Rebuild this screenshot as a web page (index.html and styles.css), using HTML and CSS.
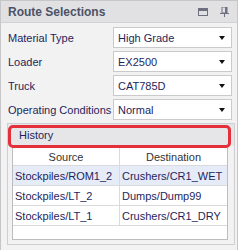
FILE: index.html
```html
<!DOCTYPE html>
<html lang="en">
<head>
    <meta charset="UTF-8">
    <link rel="stylesheet" href="styles.css">
    <title>Route Selections</title>
</head>
<body>

    <div class="panel">
        <div class="panel-header">
            <span class="panel-title">Route Selections</span>
            <span class="panel-icons">
                <svg width="10" height="8" viewBox="0 0 10 8"><rect x="0.5" y="0.5" width="9" height="7" fill="none" stroke="#6e7080"/><rect x="0" y="0" width="10" height="3" fill="#6e7080"/></svg>
                <svg width="9" height="10" viewBox="0 0 9 10"><rect x="2" y="0" width="5" height="6" fill="none" stroke="#6e7080"/><rect x="5" y="0" width="2" height="6" fill="#6e7080"/><rect x="0" y="6" width="9" height="1" fill="#6e7080"/><rect x="4" y="7" width="1" height="3" fill="#6e7080"/></svg>
            </span>
        </div>

        <div class="form">
            <label>Material Type</label>
            <div class="combo">High Grade</div>

            <label>Loader</label>
            <div class="combo">EX2500</div>

            <label>Truck</label>
            <div class="combo">CAT785D</div>

            <label>Operating Conditions</label>
            <div class="combo">Normal</div>
        </div>

        <div class="group">
            <div class="group-header">History</div>
            <div class="grid">
                <table>
                    <tr class="head">
                        <th class="col-src">Source</th>
                        <th>Destination</th>
                    </tr>
                    <tr class="selected">
                        <td>Stockpiles/ROM1_2</td>
                        <td>Crushers/CR1_WET</td>
                    </tr>
                    <tr>
                        <td>Stockpiles/LT_2</td>
                        <td>Dumps/Dump99</td>
                    </tr>
                    <tr>
                        <td>Stockpiles/LT_1</td>
                        <td>Crushers/CR1_DRY</td>
                    </tr>
                </table>
            </div>
        </div>
    </div>

</body>
</html>
```

FILE: styles.css
```css
body {
    font-family: 'Liberation Sans', Arial, sans-serif;
    font-size: 11px;
    background-color: #fff;
    margin: 0;
    padding: 0;
}

.panel {
    width: 238px;
    height: 250px;
    box-sizing: border-box;
    background-color: #f2f2f2;
    border: 1px solid #c6c6c8;
    border-bottom: none;
}

.panel-header {
    height: 21px;
    display: flex;
    align-items: center;
    justify-content: space-between;
    padding: 0 8px 0 7px;
    background-color: #e1e1e4;
    border-bottom: 1px solid #d2d2d6;
}

.panel-title {
    font-size: 12px;
    font-weight: bold;
    color: #4d5266;
}

.panel-icons {
    display: flex;
    align-items: center;
    gap: 12px;
}

.form {
    display: grid;
    grid-template-columns: 105px 119px;
    row-gap: 3px;
    padding: 4px 0 0 7px;
}

label {
    color: #1f1f5c;
    display: flex;
    align-items: center;
    height: 21px;
    white-space: nowrap;
}

.combo {
    height: 21px;
    box-sizing: border-box;
    background-color: #fff;
    border: 1px solid #cacacc;
    color: #1f1f5c;
    display: flex;
    align-items: center;
    padding-left: 4px;
    position: relative;
}

.combo::after {
    content: "";
    position: absolute;
    right: 6px;
    top: 8px;
    border-left: 3.5px solid transparent;
    border-right: 3.5px solid transparent;
    border-top: 4px solid #111;
}

.group {
    margin: 3px 2px 0 6px;
    height: 122px;
    box-sizing: border-box;
    border: 1px solid #cfcfd2;
    padding: 0 6px 0 4px;
}

.group-header {
    height: 22px;
    margin: 0 -6px 1px -4px;
    padding-left: 11px;
    display: flex;
    align-items: center;
    background-color: #e6e6e9;
    color: #1f1f5c;
    position: relative;
}

.group-header::after {
    content: "";
    position: absolute;
    left: 0;
    top: 1px;
    right: 3px;
    bottom: -2px;
    border: 3px solid #e3303b;
    border-radius: 5px;
}

.grid {
    height: 93px;
    box-sizing: border-box;
    background-color: #fff;
    border: 1px solid #bdbdc0;
}

table {
    width: 100%;
    border-collapse: collapse;
}

th, td {
    height: 19px;
    padding: 0 2px;
    border: 1px solid #dadadc;
    white-space: nowrap;
    color: #1f1f5c;
    font-weight: normal;
    text-align: left;
}

tr:first-child th {
    border-top: none;
}

th:first-child, td:first-child {
    border-left: none;
}

th:last-child, td:last-child {
    border-right: none;
}

th {
    text-align: center;
    color: #333;
    height: 17px;
}

.col-src {
    width: 102px;
}

.selected td {
    background-color: #e6ebf8;
}
```
